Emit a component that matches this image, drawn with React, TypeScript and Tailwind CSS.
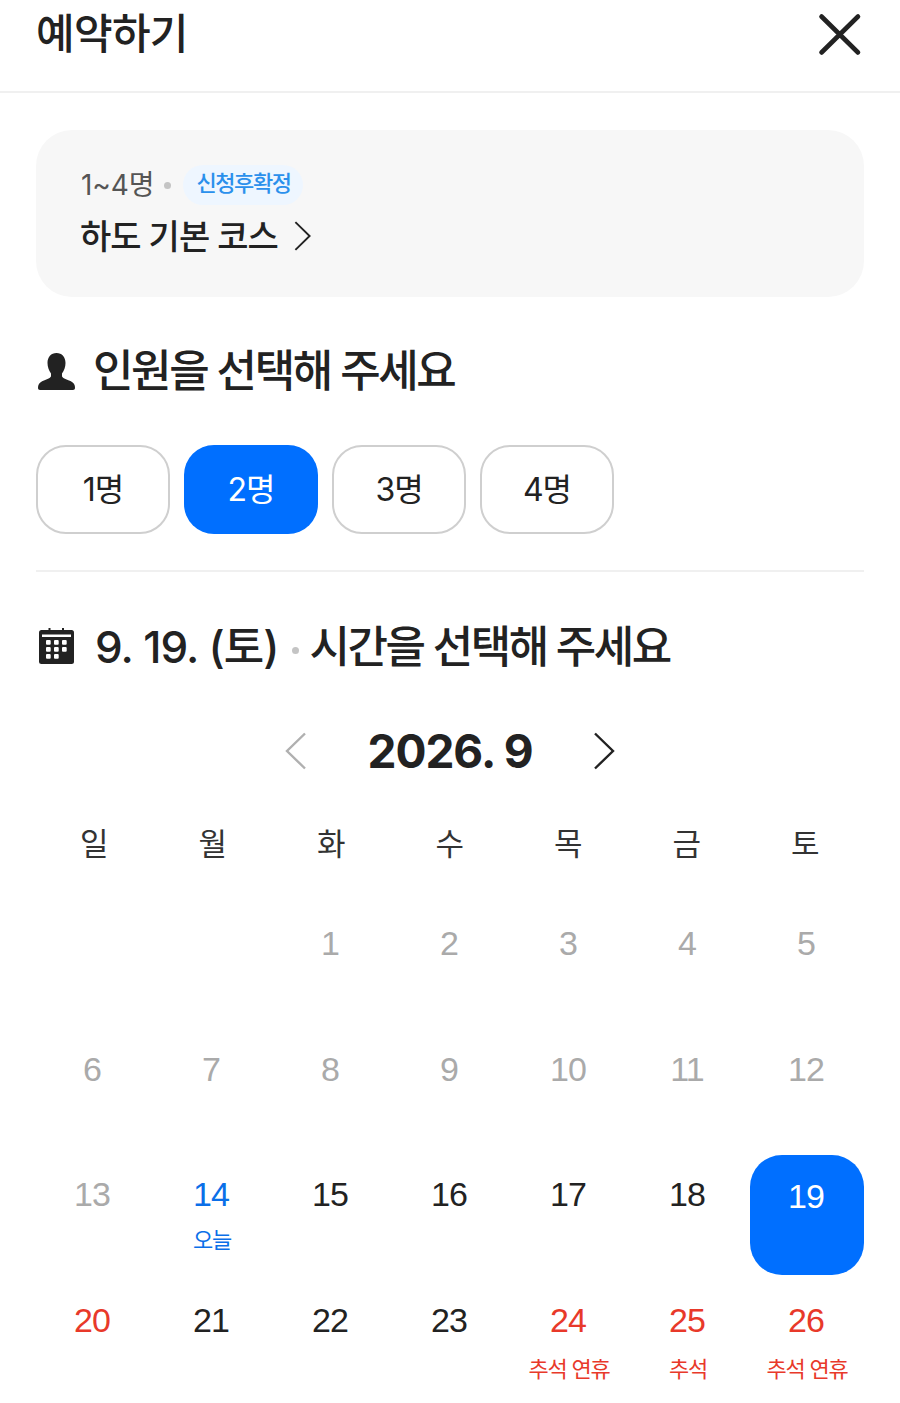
const font = "font-['Inter','Noto_Sans_CJK_KR',sans-serif]";

type Day = { d?: number; tone?: "muted" | "dark" | "blue" | "red" | "selected"; note?: string };

const days: Day[] = [
  {}, {},
  ...[1, 2, 3, 4, 5, 6, 7, 8, 9, 10, 11, 12, 13].map((d) => ({ d, tone: "muted" as const })),
  { d: 14, tone: "blue", note: "오늘" },
  { d: 15, tone: "dark" }, { d: 16, tone: "dark" }, { d: 17, tone: "dark" }, { d: 18, tone: "dark" },
  { d: 19, tone: "selected" },
  { d: 20, tone: "red" }, { d: 21, tone: "dark" }, { d: 22, tone: "dark" }, { d: 23, tone: "dark" },
  { d: 24, tone: "red", note: "추석 연휴" }, { d: 25, tone: "red", note: "추석" }, { d: 26, tone: "red", note: "추석 연휴" },
];

const toneClass = {
  muted: "text-[#aaaaaa]",
  dark: "text-[#222222]",
  blue: "text-[#0b6fe8]",
  red: "text-[#e8392a]",
  selected: "text-white bg-[#006fff] rounded-[32px]",
};

function Chevron({ dir, className }: { dir: "l" | "r"; className: string }) {
  return (
    <svg viewBox="0 0 24 38" className={className} fill="none" stroke="currentColor" strokeWidth="2.4">
      <path d={dir === "r" ? "M3 1.5 L21 19 L3 36.5" : "M21 1.5 L3 19 L21 36.5"} />
    </svg>
  );
}

export default function App() {
  return (
    <div className={`${font} w-[900px] h-[1403px] overflow-hidden bg-white text-[#222222]`}>
      <header className="h-[93px] border-b-2 border-[#f0f0f0] flex items-start justify-between pl-[36px] pr-[38px]">
        <h1 className="text-[42px] leading-[68px] font-medium tracking-[-0.7px]">예약하기</h1>
        <svg viewBox="0 0 44 44" className="w-[44px] h-[44px] mt-[13px]" stroke="#222222" strokeWidth="4.6" strokeLinecap="round" fill="none">
          <path d="M3.500 3.500 L40 39.500 M40 3.500 L3.500 39.500" />
        </svg>
      </header>

      <main className="px-[36px]">
        <section className="mt-[37px] h-[167px] rounded-[36px] bg-[#f7f7f7] pl-[45px] pt-[35px]">
          <div className="flex items-center h-[40px]">
            <span className="text-[28px] tracking-[-0.1px] text-[#555555]">1~4명</span>
            <span className="ml-[10px] w-[7px] h-[7px] rounded-full bg-[#c4c4c4]" />
            <span className="ml-[12px] h-[40px] pl-[13px] pr-[12px] rounded-[20px] bg-[#eef6ff] text-[#2b90ec] text-[22px] leading-[36px] font-medium tracking-[-1.4px]">신청후확정</span>
          </div>
          <div className="flex items-center mt-[9px] -ml-[1px]">
            <span className="text-[34px] leading-[46px] font-medium tracking-[-1px]">하도 기본 코스</span>
            <Chevron dir="r" className="ml-[15px] w-[19px] h-[30px] -mt-[3px]" />
          </div>
        </section>

        <h2 className="mt-[44px] h-[60px] flex items-center text-[44px] font-medium tracking-[-2.4px]">
          <svg viewBox="0 0 37 37" className="w-[37px] h-[37px] ml-[2px] mr-[18px]" fill="#222222">
            <path d="M18.500 0C24 0 27.500 4 27.500 10C27.500 14 26 18 24 20.500V23C24 25 28 26 31 27.500C35 29 37 31 37 35C37 36.200 36.200 37 35 37H2C.8 37 0 36.200 0 35C0 31 2 29 6 27.500C9 26 13 25 13 23V20.500C11 18 9.500 14 9.500 10C9.500 4 13 0 18.500 0Z" />
          </svg>
          인원을 선택해 주세요
        </h2>

        <div className="mt-[44px] flex gap-[14px]">
          {["1명", "2명", "3명", "4명"].map((t, i) => (
            <div
              key={t}
              className={`w-[134px] h-[89px] rounded-[30px] flex items-center justify-center text-[32px] tracking-[-1px] ${
                i === 1 ? "bg-[#006fff] text-white" : "border-2 border-[#cfcfcf] text-[#222222]"
              }`}
            >
              {t}
            </div>
          ))}
        </div>

        <div className="mt-[36px] h-[2px] bg-[#f0f0f0]" />

        <h2 className="mt-[45px] h-[60px] flex items-center text-[44px] font-medium tracking-[-1px]">
          <svg viewBox="0 0 35 36" className="w-[35px] h-[36px] ml-[3px] mr-[21px] -mt-[2px]" fill="#222222">
            <rect x="0" y="2" width="35" height="34" rx="2.500" />
            <rect x="9.500" y="0" width="2" height="4" />
            <rect x="23" y="0" width="2" height="4" />
            <rect x="3" y="6.500" width="29" height="2.500" fill="#ffffff" />
            <g fill="#ffffff">
              <rect x="7" y="12" width="4.700" height="4.700" rx="1" />
              <rect x="15" y="12" width="4.700" height="4.700" rx="1" />
              <rect x="23" y="12" width="4.700" height="4.700" rx="1" />
              <rect x="7" y="19" width="4.700" height="4.700" rx="1" />
              <rect x="15" y="19" width="4.700" height="4.700" rx="1" />
              <rect x="23" y="19" width="4.700" height="4.700" rx="1" />
              <rect x="7" y="26" width="4.700" height="4.700" rx="1" />
              <rect x="15" y="26" width="4.700" height="4.700" rx="1" />
            </g>
          </svg>
          <span>9. 19. (토)</span>
          <span className="ml-[13px] mr-[11px] w-[7px] h-[7px] rounded-full bg-[#c4c4c4] mt-[6px]" />
          <span className="tracking-[-2.5px]">시간을 선택해 주세요</span>
        </h2>

        <div className="mt-[44px] flex items-center justify-center h-[60px]">
          <Chevron dir="l" className="w-[24px] h-[38px] text-[#b0b0b0]" />
          <span className="mx-[59px] text-[46px] font-bold tracking-[-1px] leading-none">2026. 9</span>
          <Chevron dir="r" className="w-[24px] h-[38px]" />
        </div>

        <div className="mt-[41px] ml-[-1px] grid grid-cols-[repeat(7,118.5px)] text-center">
          {["일", "월", "화", "수", "목", "금", "토"].map((w) => (
            <div key={w} className="text-[31px] leading-[44px] text-[#333333]">{w}</div>
          ))}
        </div>

        <div className="mt-[38px] grid grid-cols-[repeat(7,114px)] auto-rows-[120px] gap-x-[5px] gap-y-[5.500px] text-center">
          {days.map((c, i) => (
            <div key={i} className={`flex flex-col items-center pt-[19px] ${c.tone ? toneClass[c.tone] : ""}`}>
              {c.d !== undefined && (
                <>
                  <span className={`-ml-[2px] font-['Liberation_Sans','Inter',sans-serif] text-[34px] leading-[40px] tracking-[-1px] ${c.tone === "selected" ? "mt-[2px]" : ""}`}>{c.d}</span>
                  {c.note && <span className={`${c.tone === "blue" ? "mt-[11px]" : "mt-[14px]"} text-[22px] leading-[30px] tracking-[-1.2px]`}>{c.note}</span>}
                </>
              )}
            </div>
          ))}
        </div>
      </main>
    </div>
  );
}
